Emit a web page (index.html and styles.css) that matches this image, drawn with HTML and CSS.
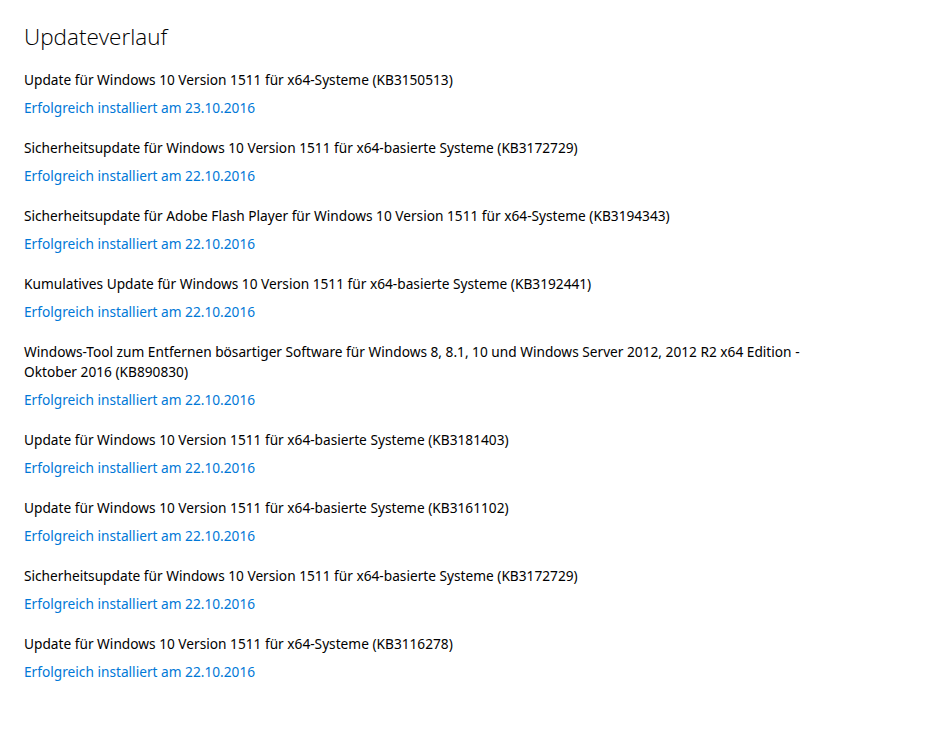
FILE: index.html
```html
<!DOCTYPE html>
<html lang="de">
<head>
<meta charset="utf-8">
<title>Updateverlauf</title>
<link rel="stylesheet" href="styles.css">
</head>
<body>
<main class="page">
  <h1 class="heading">Updateverlauf</h1>
  <ul class="history">
    <li class="entry">
      <div class="entry-title">Update für Windows 10 Version 1511 für x64-Systeme (KB3150513)</div>
      <a class="entry-status" href="#">Erfolgreich installiert am 23.10.2016</a>
    </li>
    <li class="entry">
      <div class="entry-title">Sicherheitsupdate für Windows 10 Version 1511 für x64-basierte Systeme (KB3172729)</div>
      <a class="entry-status" href="#">Erfolgreich installiert am 22.10.2016</a>
    </li>
    <li class="entry">
      <div class="entry-title">Sicherheitsupdate für Adobe Flash Player für Windows 10 Version 1511 für x64-Systeme (KB3194343)</div>
      <a class="entry-status" href="#">Erfolgreich installiert am 22.10.2016</a>
    </li>
    <li class="entry">
      <div class="entry-title">Kumulatives Update für Windows 10 Version 1511 für x64-basierte Systeme (KB3192441)</div>
      <a class="entry-status" href="#">Erfolgreich installiert am 22.10.2016</a>
    </li>
    <li class="entry">
      <div class="entry-title">Windows-Tool zum Entfernen bösartiger Software für Windows 8, 8.1, 10 und Windows Server 2012, 2012 R2 x64 Edition - Oktober 2016 (KB890830)</div>
      <a class="entry-status" href="#">Erfolgreich installiert am 22.10.2016</a>
    </li>
    <li class="entry">
      <div class="entry-title">Update für Windows 10 Version 1511 für x64-basierte Systeme (KB3181403)</div>
      <a class="entry-status" href="#">Erfolgreich installiert am 22.10.2016</a>
    </li>
    <li class="entry">
      <div class="entry-title">Update für Windows 10 Version 1511 für x64-basierte Systeme (KB3161102)</div>
      <a class="entry-status" href="#">Erfolgreich installiert am 22.10.2016</a>
    </li>
    <li class="entry">
      <div class="entry-title">Sicherheitsupdate für Windows 10 Version 1511 für x64-basierte Systeme (KB3172729)</div>
      <a class="entry-status" href="#">Erfolgreich installiert am 22.10.2016</a>
    </li>
    <li class="entry">
      <div class="entry-title">Update für Windows 10 Version 1511 für x64-Systeme (KB3116278)</div>
      <a class="entry-status" href="#">Erfolgreich installiert am 22.10.2016</a>
    </li>
  </ul>
</main>
</body>
</html>
```
FILE: styles.css
```css
html, body {
  margin: 0;
  padding: 0;
  background: #ffffff;
}
body {
  font-family: "Noto Sans", "Open Sans", sans-serif;
  font-size: 13.7px;
  color: #000000;
}
.page {
  padding: 21px 0 0 24px;
  max-width: 800px;
}
.heading {
  margin: 0 0 17px 0;
  font-family: "Open Sans", "Noto Sans", sans-serif;
  font-size: 22.5px;
  line-height: 32px;
  font-weight: 300;
  color: #000000;
}
.history {
  list-style: none;
  margin: 0;
  padding: 0;
  display: flex;
  flex-direction: column;
  gap: 20px;
}
.entry {
  display: flex;
  flex-direction: column;
  align-items: flex-start;
  gap: 8px;
}
.entry-title {
  line-height: 20px;
}
.entry-status {
  line-height: 20px;
  color: #0078d7;
  text-decoration: none;
}
```
